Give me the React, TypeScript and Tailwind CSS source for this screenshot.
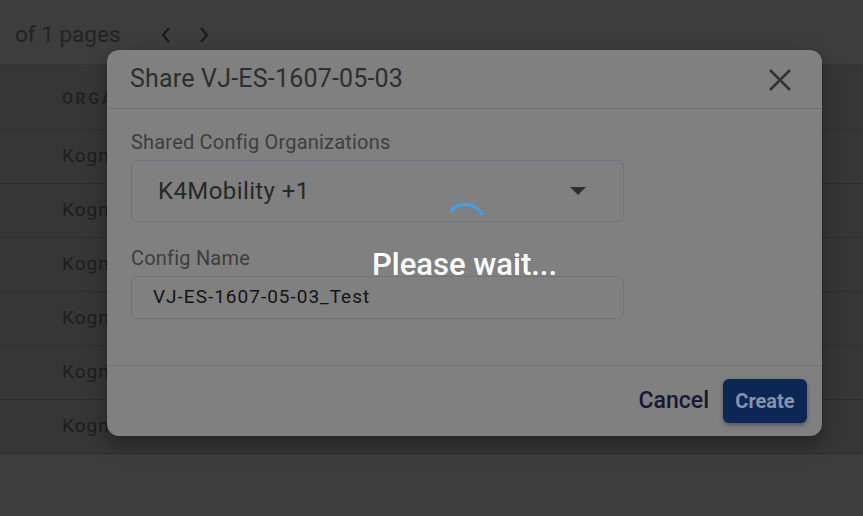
import React from "react";

const rows = [0, 1, 2, 3, 4, 5];

export default function App() {
  return (
    <div
      className="relative w-[863px] h-[516px] overflow-hidden bg-[#3d3d3d]"
      style={{ fontFamily: "Roboto, 'Liberation Sans', sans-serif" }}
    >
      {/* Background page (dimmed) */}
      <div className="flex flex-col">
        <div className="h-[65px] flex items-center pl-[15px] pt-[6px] border-b border-[#333333]">
          <span className="text-[22.5px] text-[#232323]">of 1 pages</span>
          <span className="ml-[39px] flex items-center gap-[26px] text-[#1c1c1c]">
            <svg width="12" height="18" viewBox="0 0 12 18">
              <path d="M9 2 L3 9 L9 16" fill="none" stroke="#1c1c1c" strokeWidth="2.2" />
            </svg>
            <svg width="12" height="18" viewBox="0 0 12 18">
              <path d="M3 2 L9 9 L3 16" fill="none" stroke="#1c1c1c" strokeWidth="2.2" />
            </svg>
          </span>
        </div>
        <div className="bg-[#363636]">
          <div className="h-[65px] flex items-center pl-[62px] pt-[4px] border-b border-[#2e2e2e]">
            <span className="text-[16px] font-bold tracking-[2.5px] text-[#232323]">ORGANIZATION</span>
          </div>
          {rows.map((r) => (
            <div key={r} className="h-[54px] flex items-center pl-[62px] border-b border-[#2e2e2e]">
              <span className="text-[19px] tracking-[1px] text-[#1e1e1e]">Kognitiv</span>
            </div>
          ))}
        </div>
      </div>

      {/* Modal */}
      <div className="absolute left-[107px] top-[50px] w-[715px] h-[386px] rounded-[12px] bg-[#808080] flex flex-col shadow-[0_8px_20px_rgba(0,0,0,0.35)]">
        <div className="h-[59px] shrink-0 flex items-center justify-between pl-[23px] pr-[30px] border-b border-[#727272]">
          <span className="text-[25px] tracking-[0.2px] text-[#2e2e2e] leading-[30px]">Share VJ-ES-1607-05-03</span>
          <svg width="24" height="24" viewBox="0 0 24 24" className="mt-[2px]">
            <path d="M2 2 L22 22 M22 2 L2 22" stroke="#333333" strokeWidth="2.6" fill="none" />
          </svg>
        </div>
        <div className="flex-1 pl-[24px] pt-[21px] border-b border-[#727272]">
          <div className="text-[20px] leading-[24px] tracking-[0.2px] text-[#3e3e3e]">Shared Config Organizations</div>
          <div className="mt-[6px] w-[493px] h-[62px] rounded-[6px] border border-[#6c7582] flex items-center justify-between pl-[26px] pr-[37px]">
            <span className="text-[24px] tracking-[0.4px] text-[#282828]">K4Mobility +1</span>
            <svg width="16" height="10" viewBox="0 0 16 10" className="-mt-[1px]">
              <path d="M0 1 L16 1 L8 9 Z" fill="#2b2d38" />
            </svg>
          </div>
          <div className="mt-[24px] text-[20px] leading-[24px] tracking-[0.2px] text-[#3e3e3e]">Config Name</div>
          <div className="mt-[6px] w-[493px] h-[43px] rounded-[6px] border border-[#6c7582] flex items-center pl-[21px]">
            <span className="text-[19px] tracking-[1px] text-[#141414]">VJ-ES-1607-05-03_Test</span>
          </div>
        </div>
        <div className="h-[70px] shrink-0 flex items-center justify-end pr-[15px] gap-[14px]">
          <span className="text-[23px] font-medium text-[#17173a]">Cancel</span>
          <div className="w-[84px] h-[44px] rounded-[6px] bg-[#0c2656] flex items-center justify-center shadow-[0_2px_4px_rgba(0,0,0,0.35)]">
            <span className="text-[20px] font-bold text-[#8593a8]">Create</span>
          </div>
        </div>
      </div>

      {/* Loading overlay */}
      <div className="absolute left-[440px] top-[196px] w-[52px] h-[52px]">
        <svg width="52" height="52" viewBox="0 0 52 52">
          <path d="M11.5 14.5 A19 19 0 0 1 42 18" fill="none" stroke="#3aa2f0" strokeWidth="3.2" strokeLinecap="round" />
        </svg>
      </div>
      <div className="absolute left-[372px] top-[245px] text-[31px] font-medium text-white leading-[40px]">
        Please wait...
      </div>
    </div>
  );
}
